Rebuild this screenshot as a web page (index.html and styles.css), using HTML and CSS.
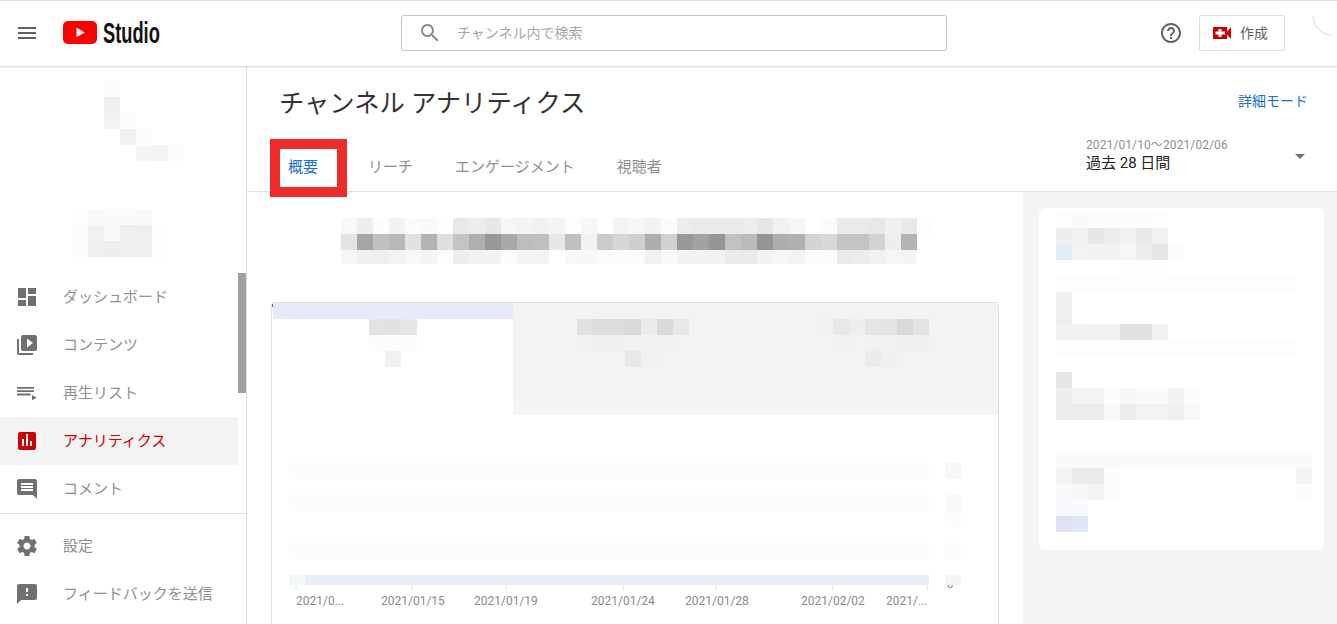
FILE: index.html
```html
<!DOCTYPE html>
<html lang="ja">
<head>
<meta charset="utf-8">
<title>チャンネル アナリティクス</title>
<link rel="stylesheet" href="styles.css">
</head>
<body>
<header class="topbar">
  <div class="brand">
    <svg class="menu-icon" viewBox="0 0 24 24" width="24" height="24"><path fill="#606060" d="M3 18h18v-2H3v2zm0-5h18v-2H3v2zm0-7v2h18V6H3z"/></svg>
    <svg class="yt-logo" viewBox="0 0 34 24" width="34" height="24"><rect y="0" width="34" height="23" rx="5" fill="#ff0000"/><path fill="#fff" d="M13.500 6.700v9.600l8.300-4.800z"/></svg>
    <span class="studio">Studio</span>
  </div>
  <div class="search">
    <svg viewBox="0 0 24 24" width="24" height="24"><path fill="#8a8a8a" d="M15.500 14h-.79l-.28-.27C15.410 12.590 16 11.110 16 9.500 16 5.910 13.090 3 9.500 3S3 5.910 3 9.500 5.910 16 9.500 16c1.610 0 3.090-.59 4.230-1.570l.27.28v.79l5 4.990L20.490 19l-4.990-5zm-6 0C7.010 14 5 11.990 5 9.500S7.010 5 9.500 5 14 7.010 14 9.500 11.990 14 9.500 14z"/></svg>
    <span>チャンネル内で検索</span>
  </div>
  <svg class="help" viewBox="0 0 24 24" width="24" height="24"><path fill="#606060" d="M11 18h2v-2h-2v2zm1-16C6.480 2 2 6.480 2 12s4.480 10 10 10 10-4.480 10-10S17.520 2 12 2zm0 18c-4.410 0-8-3.590-8-8s3.590-8 8-8 8 3.590 8 8-3.590 8-8 8zm0-14c-2.210 0-4 1.790-4 4h2c0-1.100.9-2 2-2s2 .9 2 2c0 2-3 1.750-3 5h2c0-2.250 3-2.500 3-5 0-2.210-1.790-4-4-4z"/></svg>
  <div class="create">
    <svg viewBox="0 0 18 12" width="18" height="12"><path fill="#cc0000" d="M0 0h14v4.500L18 0v12l-4-4.500V12H0z"/><path fill="#fff" d="M5.500 2h3v2.500H12v3H8.500V10h-3V7.500H2.500v-3h3z"/></svg>
    <span>作成</span>
  </div>
  <svg class="spinner" viewBox="0 0 25 24" width="25" height="24"><path fill="none" stroke="#e8e8e8" stroke-width="1.500" d="M1 2c0 9 8 19 19 19"/></svg>
</header>

<div class="page">
  <aside class="sidebar">
    <svg class="px side-blur" width="238" height="207" viewBox="0 0 238 207">
      <rect x="104" y="15" fill="#fbfbfb"/><rect x="104" y="31" fill="#efefef"/><rect x="104" y="47" fill="#f3f3f3"/><rect x="120" y="47" fill="#fcfcfc"/>
      <rect x="120" y="63" fill="#f1f1f1"/><rect x="136" y="63" fill="#fcfcfc"/><rect x="136" y="79" fill="#f5f5f5"/><rect x="152" y="79" fill="#f3f3f3"/><rect x="168" y="79" fill="#fbfbfb"/>
      <rect x="72" y="143" fill="#fdfdfd"/><rect x="88" y="143" fill="#f8f8f8"/><rect x="104" y="143" fill="#fafafa"/><rect x="120" y="143" fill="#fafafa"/><rect x="136" y="143" fill="#f8f8f8"/>
      <rect x="72" y="159" fill="#fbfbfb"/><rect x="88" y="159" fill="#f1f1f1"/><rect x="104" y="159" fill="#f9f9f9"/><rect x="120" y="159" fill="#efefef"/><rect x="136" y="159" fill="#efefef"/><rect x="152" y="159" fill="#fdfdfd"/>
      <rect x="72" y="175" fill="#fbfbfb"/><rect x="88" y="175" fill="#efefef"/><rect x="104" y="175" fill="#eeeeee"/><rect x="120" y="175" fill="#efefef"/><rect x="136" y="175" fill="#efefef"/><rect x="152" y="175" fill="#fdfdfd"/>
    </svg>
    <nav class="nav">
      <a class="nav-item"><svg viewBox="0 0 24 24" width="24" height="24"><path d="M3 13h8V3H3v10zm0 8h8v-6H3v6zm10 0h8V11h-8v10zm0-18v6h8V3h-8z"/></svg><span>ダッシュボード</span></a>
      <a class="nav-item"><svg viewBox="0 0 24 24" width="24" height="24"><path d="M4 6H2v14c0 1.100.9 2 2 2h14v-2H4V6zm16-4H8c-1.100 0-2 .9-2 2v12c0 1.100.9 2 2 2h12c1.100 0 2-.9 2-2V4c0-1.100-.9-2-2-2zm-8 12.500v-9l6 4.500-6 4.500z"/></svg><span>コンテンツ</span></a>
      <a class="nav-item"><svg viewBox="0 0 24 24" width="24" height="24"><path d="M2 6h17v1.800H2zm0 3.300h17v1.800H2zm0 3.300h13.500v1.800H2zM17 14v5.300l4.700-2.650z"/></svg><span>再生リスト</span></a>
      <a class="nav-item active"><svg viewBox="0 0 24 24" width="24" height="24"><rect class="red" x="3" y="3" width="18" height="18" rx="2"/><path fill="#fff" d="M7 10h2v7H7zm4-5h2v12h-2zm4 7h2v5h-2z"/></svg><span>アナリティクス</span></a>
      <a class="nav-item"><svg viewBox="0 0 24 24" width="24" height="24"><path d="M21.990 4c0-1.100-.89-2-1.990-2H4c-1.100 0-2 .9-2 2v12c0 1.100.9 2 2 2h14l4 4-.01-18zM18 14H6v-2h12v2zm0-3H6V9h12v2zm0-3H6V6h12v2z"/></svg><span>コメント</span></a>
    </nav>
    <nav class="nav nav-lower">
      <a class="nav-item"><svg viewBox="0 0 24 24" width="24" height="24"><path d="M19.430 12.980c.04-.32.07-.64.07-.98s-.03-.66-.07-.98l2.110-1.650c.19-.15.24-.42.12-.64l-2-3.460c-.12-.22-.39-.3-.61-.22l-2.490 1c-.52-.4-1.080-.73-1.690-.98l-.38-2.650C14.460 2.180 14.250 2 14 2h-4c-.25 0-.46.18-.49.42l-.38 2.650c-.61.25-1.170.59-1.690.98l-2.490-1c-.23-.09-.49 0-.61.22l-2 3.460c-.13.22-.07.49.12.64l2.110 1.650c-.04.32-.07.65-.07.98s.03.66.07.98l-2.110 1.650c-.19.15-.24.42-.12.64l2 3.460c.12.22.39.3.61.22l2.490-1c.52.4 1.080.73 1.690.98l.38 2.650c.03.24.24.42.49.42h4c.25 0 .46-.18.49-.42l.38-2.650c.61-.25 1.170-.59 1.690-.98l2.490 1c.23.09.49 0 .61-.22l2-3.460c.12-.22.07-.49-.12-.64l-2.110-1.650zM12 15.500c-1.930 0-3.500-1.570-3.500-3.500s1.570-3.500 3.500-3.500 3.500 1.570 3.500 3.500-1.570 3.500-3.500 3.500z"/></svg><span>設定</span></a>
      <a class="nav-item"><svg viewBox="0 0 24 24" width="24" height="24"><path d="M20 2H4c-1.100 0-1.990.9-1.990 2L2 22l4-4h14c1.100 0 2-.9 2-2V4c0-1.100-.9-2-2-2zm-7 12h-2v-2h2v2zm0-4h-2V6h2v4z"/></svg><span>フィードバックを送信</span></a>
    </nav>
    <div class="thumb"></div>
  </aside>

  <main class="main">
    <div class="title-row">
      <h1>チャンネル アナリティクス</h1>
      <a class="advanced">詳細モード</a>
    </div>
    <div class="tab-row">
      <div class="tabs">
        <a class="tab current">概要</a>
        <a class="tab">リーチ</a>
        <a class="tab">エンゲージメント</a>
        <a class="tab">視聴者</a>
      </div>
      <div class="period">
        <div class="period-text">
          <div class="period-range">2021/01/10〜2021/02/06</div>
          <div class="period-label">過去 28 日間</div>
        </div>
        <div class="caret"></div>
      </div>
      <div class="highlight"></div>
    </div>

    <div class="content">
      <section class="report">
        <svg class="px headline" width="592" height="46" viewBox="0 0 592 46">
          <rect x="0" y="0" fill="#f8f8f8"/><rect x="16" y="0" fill="#eeeeee"/><rect x="32" y="0" fill="#fcfcfc"/><rect x="48" y="0" fill="#f2f2f2"/><rect x="64" y="0" fill="#fbfbfb"/><rect x="80" y="0" fill="#f9f9f9"/><rect x="96" y="0" fill="#fefefe"/><rect x="112" y="0" fill="#e8e8e8"/><rect x="128" y="0" fill="#ececec"/><rect x="144" y="0" fill="#e7e7e7"/><rect x="160" y="0" fill="#f6f6f6"/><rect x="176" y="0" fill="#f4f4f4"/><rect x="192" y="0" fill="#f1f1f1"/><rect x="208" y="0" fill="#f4f4f4"/><rect x="224" y="0" fill="#fdfdfd"/><rect x="240" y="0" fill="#f7f7f7"/><rect x="272" y="0" fill="#f3f3f3"/><rect x="288" y="0" fill="#f6f6f6"/><rect x="304" y="0" fill="#f2f2f2"/><rect x="320" y="0" fill="#fbfbfb"/><rect x="336" y="0" fill="#ececec"/><rect x="352" y="0" fill="#eaeaea"/><rect x="368" y="0" fill="#ebebeb"/><rect x="384" y="0" fill="#ebebeb"/><rect x="400" y="0" fill="#ececec"/><rect x="416" y="0" fill="#e6e6e6"/><rect x="432" y="0" fill="#f1f1f1"/><rect x="448" y="0" fill="#f6f6f6"/><rect x="480" y="0" fill="#fbfbfb"/><rect x="496" y="0" fill="#eaeaea"/><rect x="512" y="0" fill="#eaeaea"/><rect x="528" y="0" fill="#e8e8e8"/><rect x="544" y="0" fill="#f0f0f0"/><rect x="560" y="0" fill="#e9e9e9"/><rect x="576" y="0" fill="#fdfdfd"/>
          <rect x="0" y="16" fill="#e4e4e4"/><rect x="16" y="16" fill="#a6a6a6"/><rect x="32" y="16" fill="#c0c0c0"/><rect x="48" y="16" fill="#b8b8b8"/><rect x="64" y="16" fill="#e2e2e2"/><rect x="80" y="16" fill="#b3b3b3"/><rect x="96" y="16" fill="#dedede"/><rect x="112" y="16" fill="#c4c4c4"/><rect x="128" y="16" fill="#afafaf"/><rect x="144" y="16" fill="#989898"/><rect x="160" y="16" fill="#a9a9a9"/><rect x="176" y="16" fill="#bdbdbd"/><rect x="192" y="16" fill="#c0c0c0"/><rect x="208" y="16" fill="#e7e7e7"/><rect x="224" y="16" fill="#bfbfbf"/><rect x="240" y="16" fill="#f2f2f2"/><rect x="256" y="16" fill="#cccccc"/><rect x="272" y="16" fill="#d6d6d6"/><rect x="288" y="16" fill="#cfcfcf"/><rect x="304" y="16" fill="#aeaeae"/><rect x="320" y="16" fill="#d1d1d1"/><rect x="336" y="16" fill="#989898"/><rect x="352" y="16" fill="#a2a2a2"/><rect x="368" y="16" fill="#969696"/><rect x="384" y="16" fill="#c2c2c2"/><rect x="400" y="16" fill="#bbbbbb"/><rect x="416" y="16" fill="#959595"/><rect x="432" y="16" fill="#aeaeae"/><rect x="448" y="16" fill="#b0b0b0"/><rect x="464" y="16" fill="#d3d3d3"/><rect x="480" y="16" fill="#d8d8d8"/><rect x="496" y="16" fill="#c4c4c4"/><rect x="512" y="16" fill="#c4c4c4"/><rect x="528" y="16" fill="#d3d3d3"/><rect x="544" y="16" fill="#eeeeee"/><rect x="560" y="16" fill="#b3b3b3"/>
          <rect x="0" y="32" fill="#f6f6f6"/><rect x="16" y="32" fill="#f0f0f0"/><rect x="32" y="32" fill="#efefef"/><rect x="48" y="32" fill="#f3f3f3"/><rect x="64" y="32" fill="#f8f8f8"/><rect x="80" y="32" fill="#f5f5f5"/><rect x="96" y="32" fill="#fdfdfd"/><rect x="112" y="32" fill="#eeeeee"/><rect x="128" y="32" fill="#f2f2f2"/><rect x="144" y="32" fill="#f2f2f2"/><rect x="160" y="32" fill="#fcfcfc"/><rect x="176" y="32" fill="#f4f4f4"/><rect x="192" y="32" fill="#f3f3f3"/><rect x="224" y="32" fill="#f8f8f8"/><rect x="240" y="32" fill="#f7f7f7"/><rect x="256" y="32" fill="#fbfbfb"/><rect x="272" y="32" fill="#fbfbfb"/><rect x="288" y="32" fill="#fbfbfb"/><rect x="304" y="32" fill="#f1f1f1"/><rect x="320" y="32" fill="#f9f9f9"/><rect x="336" y="32" fill="#f2f2f2"/><rect x="352" y="32" fill="#f2f2f2"/><rect x="368" y="32" fill="#f1f1f1"/><rect x="384" y="32" fill="#ebebeb"/><rect x="400" y="32" fill="#eaeaea"/><rect x="416" y="32" fill="#f2f2f2"/><rect x="432" y="32" fill="#f6f6f6"/><rect x="448" y="32" fill="#f3f3f3"/><rect x="464" y="32" fill="#fcfcfc"/><rect x="480" y="32" fill="#fbfbfb"/><rect x="496" y="32" fill="#eaeaea"/><rect x="512" y="32" fill="#ececec"/><rect x="528" y="32" fill="#f1f1f1"/><rect x="544" y="32" fill="#f6f6f6"/><rect x="560" y="32" fill="#f5f5f5"/>
        </svg>

        <div class="card">
          <div class="metrics">
            <svg class="px metric" width="241" height="112" viewBox="0 0 241 112">
              <rect class="free" x="1" y="0" width="240" height="16" fill="#e8ebf7"/>
              <rect class="free" x="0" y="1" width="1" height="3" fill="#2a6fd8"/>
              <rect x="97" y="16" fill="#e3e3e3"/><rect x="113" y="16" fill="#e2e2e2"/><rect x="129" y="16" fill="#e5e6e5"/>
              <rect x="97" y="32" fill="#fcfcfc"/><rect x="113" y="32" fill="#fcfcfc"/><rect x="129" y="32" fill="#fcfcfc"/>
              <rect x="113" y="48" fill="#f1f1f1"/>
            </svg>
            <svg class="px metric shaded" width="485" height="112" viewBox="0 0 485 112">
              <rect x="64" y="16" fill="#e1e1e1"/><rect x="80" y="16" fill="#dddddd"/><rect x="96" y="16" fill="#dddddd"/><rect x="112" y="16" fill="#dadada"/><rect x="128" y="16" fill="#ecebe9"/><rect x="144" y="16" fill="#dadada"/><rect x="160" y="16" fill="#e7e9e8"/>
              <rect x="64" y="32" fill="#f1f1f1"/><rect x="80" y="32" fill="#f0f0ef"/><rect x="96" y="32" fill="#f0f0ef"/><rect x="112" y="32" fill="#f1f1f1"/><rect x="128" y="32" fill="#f2f2f2"/><rect x="144" y="32" fill="#f1f1ef"/><rect x="160" y="32" fill="#f2f3f3"/>
              <rect x="112" y="48" fill="#e8e8e8"/><rect x="128" y="48" fill="#f1f1f1"/>
              <rect x="304" y="16" fill="#f1f1f1"/><rect x="320" y="16" fill="#e8e8e8"/><rect x="336" y="16" fill="#eeeeee"/><rect x="352" y="16" fill="#e5e5e5"/><rect x="368" y="16" fill="#e4e4e4"/><rect x="384" y="16" fill="#d9d9d9"/><rect x="400" y="16" fill="#e2e4e3"/>
              <rect x="320" y="32" fill="#f2f2f2"/><rect x="352" y="32" fill="#f1f1f1"/><rect x="368" y="32" fill="#f1f1f1"/><rect x="384" y="32" fill="#f0f0f0"/><rect x="400" y="32" fill="#f0f0f0"/>
              <rect x="352" y="48" fill="#ebebeb"/><rect x="368" y="48" fill="#f0f0f0"/>
              <rect class="free" x="0" y="96" width="485" height="16" fill="#f4f4f4"/>
            </svg>
          </div>
          <svg class="chart" width="726" height="209" viewBox="0 0 726 209">
            <rect x="17" y="48" width="640" height="16" fill="#fcfcfc"/>
            <rect x="17" y="80" width="640" height="16" fill="#fcfcfc"/>
            <rect x="17" y="128" width="640" height="16" fill="#fcfcfc"/>
            <rect x="17" y="160" width="16" height="10" fill="#f2f7fa"/>
            <rect x="33" y="160" width="624" height="10" fill="#e8f0f6"/>
            <rect x="673" y="48" width="16" height="16" fill="#f7f7f7"/>
            <rect x="673" y="80" width="16" height="16" fill="#f8f8f8"/>
            <rect x="673" y="96" width="16" height="16" fill="#fcfcfc"/>
            <rect x="673" y="128" width="16" height="16" fill="#fbfbfb"/>
            <text class="axis-zero" x="678" y="173" text-anchor="middle">0</text>
            <rect x="673" y="160" width="16" height="10" fill="#f5f5f5"/>
            <path class="ticks" d="M24 170v5M140 170v5M234 170v5M351 170v5M444 170v5M561 170v5M655 170v5"/>
            <text class="axis" x="24" y="190">2021/0...</text>
            <text class="axis" x="109" y="190">2021/01/15</text>
            <text class="axis" x="202" y="190">2021/01/19</text>
            <text class="axis" x="319" y="190">2021/01/24</text>
            <text class="axis" x="413" y="190">2021/01/28</text>
            <text class="axis" x="529" y="190">2021/02/02</text>
            <text class="axis" x="614" y="190">2021/...</text>
          </svg>
        </div>
      </section>

      <aside class="panel">
        <div class="panel-card">
          <svg class="px" width="285" height="342" viewBox="0 0 285 342">
            <rect x="17" y="4" fill="#fdfdfd"/><rect x="33" y="4" fill="#fafafa"/><rect x="49" y="4" fill="#fcfcfc"/><rect x="65" y="4" fill="#fcfcfc"/><rect x="81" y="4" fill="#fcfcfc"/><rect x="97" y="4" fill="#fcfcfc"/><rect x="113" y="4" fill="#fdfdfd"/>
            <rect x="17" y="20" fill="#eeeeee"/><rect x="33" y="20" fill="#f2f2f2"/><rect x="49" y="20" fill="#e6e6e6"/><rect x="65" y="20" fill="#eeeeee"/><rect x="81" y="20" fill="#f2f2f2"/><rect x="97" y="20" fill="#e9e9e9"/><rect x="113" y="20" fill="#f1f1f1"/>
            <rect x="17" y="36" fill="#e2eef3"/><rect x="33" y="36" fill="#f3f3f3"/><rect x="49" y="36" fill="#f2f2f2"/><rect x="65" y="36" fill="#f2f2f2"/><rect x="81" y="36" fill="#f6f6f6"/><rect x="97" y="36" fill="#eeeeee"/><rect x="113" y="36" fill="#e6e6e6"/><rect x="129" y="36" fill="#fbfbfb"/>
            <rect x="81" y="52" fill="#fefefe"/><rect x="97" y="52" fill="#fdfdfd"/><rect x="113" y="52" fill="#fefefe"/>
            <rect class="free" x="17" y="68" width="240" height="16" fill="#fdfdfd"/>
            <rect x="17" y="84" fill="#f0f0f0"/><rect x="17" y="100" fill="#efefef"/>
            <rect x="17" y="116" fill="#f1f1f1"/><rect x="33" y="116" fill="#f2f2f2"/><rect x="49" y="116" fill="#f1f1f1"/><rect x="65" y="116" fill="#f1f1f1"/><rect x="81" y="116" fill="#e2e2e2"/><rect x="97" y="116" fill="#e2e2e2"/><rect x="113" y="116" fill="#f1f1f1"/>
            <rect class="free" x="17" y="132" width="240" height="16" fill="#fdfdfd"/>
            <rect x="17" y="164" fill="#e6e6e6"/>
            <rect x="17" y="180" fill="#ededed"/><rect x="33" y="180" fill="#f3f3f3"/><rect x="49" y="180" fill="#f3f3f3"/><rect x="65" y="180" fill="#fcfcfc"/><rect x="81" y="180" fill="#f7f7f7"/><rect x="97" y="180" fill="#fafafa"/><rect x="113" y="180" fill="#fafafa"/><rect x="129" y="180" fill="#f2f2f2"/><rect x="145" y="180" fill="#fcfcfc"/>
            <rect x="17" y="196" fill="#ececec"/><rect x="33" y="196" fill="#ececec"/><rect x="49" y="196" fill="#ececec"/><rect x="65" y="196" fill="#f9f9f9"/><rect x="81" y="196" fill="#ececec"/><rect x="97" y="196" fill="#f3f3f3"/><rect x="113" y="196" fill="#f3f3f3"/><rect x="129" y="196" fill="#f0f0f0"/><rect x="145" y="196" fill="#f8f8f8"/>
            <rect class="free" x="17" y="244" width="256" height="16" fill="#fafafa"/>
            <rect x="17" y="260" fill="#f4f4f4"/><rect x="33" y="260" fill="#ebebeb"/><rect x="49" y="260" fill="#ebebeb"/><rect x="65" y="260" fill="#fcfcfc"/><rect x="257" y="260" fill="#f4f4f4"/>
            <rect x="17" y="276" fill="#fafafa"/><rect x="33" y="276" fill="#f7f7f7"/><rect x="49" y="276" fill="#f4f4f4"/><rect x="65" y="276" fill="#fbfbfb"/><rect x="257" y="276" fill="#fcfcfc"/>
            <rect x="17" y="292" fill="#f8f9fe"/><rect x="33" y="292" fill="#f8f9fe"/>
            <rect x="17" y="308" fill="#dde3f4"/><rect x="33" y="308" fill="#e0e7f6"/>
          </svg>
        </div>
      </aside>
    </div>
  </main>
</div>
</body>
</html>
```
FILE: styles.css
```css
* { box-sizing: border-box; }
html, body { margin: 0; height: 100%; overflow: hidden; }
body {
  background: #fff;
  color: #222;
  font-family: Roboto, "Noto Sans CJK JP", sans-serif;
  display: flex;
  flex-direction: column;
}
svg { display: block; flex: none; }

.px { shape-rendering: crispEdges; }
.px rect:not(.free) { width: 16px; height: 16px; }

.topbar {
  height: 66px;
  flex: none;
  display: flex;
  align-items: center;
  padding-bottom: 1px;
  border-top: 1px solid #dedede;
  box-shadow: 0 1px 2px rgba(0, 0, 0, .16);
  position: relative;
  z-index: 2;
  background: #fff;
}
.brand { display: flex; align-items: center; width: 401px; padding-left: 15px; }
.menu-icon { margin-right: 24px; }
.studio {
  display: inline-block;
  margin-left: 6px;
  font: bold 29px/30px "Liberation Sans", sans-serif;
  color: #111;
  transform: scaleX(.63);
  transform-origin: left center;
}
.search {
  width: 546px;
  height: 36px;
  border: 1px solid #c6c6c6;
  border-radius: 3px;
  display: flex;
  align-items: center;
  gap: 15px;
  padding-left: 16px;
  font-size: 14px;
  color: #a8a8a8;
}
.search span { margin-top: -2px; }
.help { margin-left: 212px; }
.create {
  margin-left: 16px;
  width: 86px;
  height: 36px;
  border: 1px solid #dedede;
  border-radius: 2px;
  display: flex;
  align-items: center;
  gap: 9px;
  padding-left: 13px;
  font-size: 14px;
  color: #606060;
}
.create span { margin-top: -2px; }
.spinner { margin-left: 27px; margin-top: -14px; }

.page { flex: 1; display: flex; min-height: 0; }
.sidebar {
  width: 247px;
  flex: none;
  border-right: 1px solid #e0e0e0;
  position: relative;
}
.thumb {
  position: absolute;
  left: 238px;
  top: 207px;
  width: 8px;
  height: 120px;
  background: #a0a0a0;
}
.nav-lower { border-top: 1px solid #e0e0e0; padding-top: 8px; }
.nav-item {
  height: 48px;
  width: 238px;
  display: flex;
  align-items: center;
  gap: 24px;
  padding-left: 15px;
  font-size: 15px;
  color: #909090;
}
.nav-item span { margin-top: -4px; }
.nav-item svg { fill: #707070; }
.nav-item.active { background: #f3f3f3; color: #cc0000; }
.nav-item .red { fill: #cc0000; }

.main { flex: 1; min-width: 0; display: flex; flex-direction: column; }
.title-row {
  height: 74px;
  flex: none;
  display: flex;
  align-items: center;
  justify-content: space-between;
  padding: 0 29px 4px 32px;
}
h1 { margin: 0; font-size: 25.3px; font-weight: 400; color: #333; }
.advanced { font-size: 14px; color: #1a6ed8; margin-top: -2px; }

.tab-row {
  height: 52px;
  flex: none;
  position: relative;
  display: flex;
  justify-content: space-between;
  border-bottom: 1px solid #e0e0e0;
}
.tabs { display: flex; align-items: center; gap: 42px; padding: 0 0 1px 41px; font-size: 15px; color: #909090; }
.tab.current { color: #1a6ed8; margin-right: 8px; }
.highlight {
  position: absolute;
  left: 23px;
  top: -1px;
  width: 77px;
  height: 58px;
  border: 10px solid #ee2c2c;
}
.period { width: 251px; display: flex; padding-right: 32px; justify-content: space-between; }
.period-range { font-size: 12px; line-height: 16px; color: #909090; margin-top: -3px; letter-spacing: .1px; }
.period-label { font-size: 15px; line-height: 20px; color: #222; }
.caret {
  width: 0;
  height: 0;
  margin-top: 14px;
  border-left: 5px solid transparent;
  border-right: 5px solid transparent;
  border-top: 5px solid #6f6f6f;
}

.content { flex: 1; display: flex; min-height: 0; }
.report { width: 776px; flex: none; padding: 26px 0 0 24px; }
.headline { margin-left: 70px; }
.card {
  margin-top: 38px;
  width: 728px;
  border: 1px solid #e0e0e0;
  border-bottom: 0;
  border-radius: 4px 4px 0 0;
}
.metrics { display: flex; }
.metric.shaded { background: #f3f3f3; }
.ticks { stroke: #dddddd; stroke-width: 1; fill: none; }
.axis { font-size: 12px; fill: #8a8a8a; font-family: Roboto, sans-serif; }
.axis-zero { font-size: 12px; fill: #8a8a8a; font-family: Roboto, sans-serif; }

.panel { flex: 1; background: #f4f4f4; padding: 16px 13px 0 16px; }
.panel-card { height: 342px; background: #fff; border-radius: 6px; }
```
